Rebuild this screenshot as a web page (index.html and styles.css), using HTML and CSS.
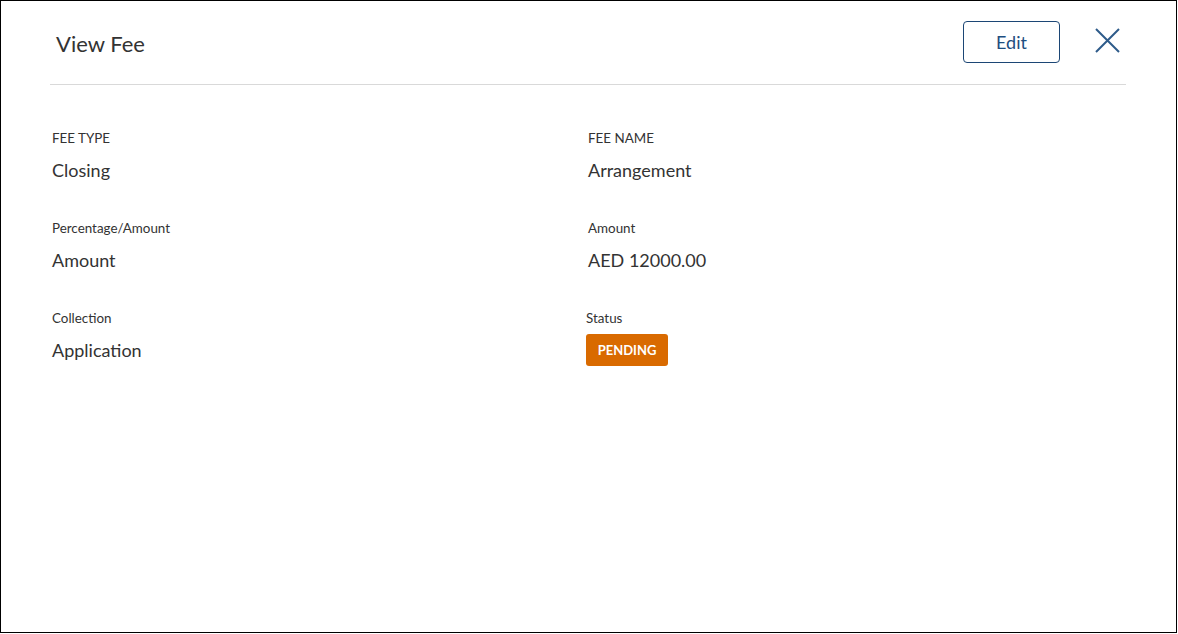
FILE: index.html
```html
<!DOCTYPE html>
<html lang="en">
<head>
<meta charset="utf-8">
<title>View Fee</title>
<link rel="stylesheet" href="styles.css">
</head>
<body>
<div class="modal">
  <header class="modal-header">
    <h1 class="modal-title">View Fee</h1>
    <div class="actions">
      <button class="btn-edit" type="button">Edit</button>
      <button class="btn-close" type="button" aria-label="Close">
        <svg width="25" height="25" viewBox="0 0 25 25" fill="none" stroke="#2e5b8a" stroke-width="2">
          <path d="M1 1 L24 24 M24 1 L1 24"/>
        </svg>
      </button>
    </div>
  </header>
  <section class="details">
    <div class="field">
      <div class="label">FEE TYPE</div>
      <div class="value">Closing</div>
    </div>
    <div class="field field-right">
      <div class="label">FEE NAME</div>
      <div class="value">Arrangement</div>
    </div>
    <div class="field">
      <div class="label">Percentage/Amount</div>
      <div class="value">Amount</div>
    </div>
    <div class="field field-right">
      <div class="label">Amount</div>
      <div class="value">AED 12000.00</div>
    </div>
    <div class="field">
      <div class="label">Collection</div>
      <div class="value">Application</div>
    </div>
    <div class="field field-status">
      <div class="label">Status</div>
      <div class="value"><span class="badge">PENDING</span></div>
    </div>
  </section>
</div>
</body>
</html>
```

FILE: styles.css
```css
* { box-sizing: border-box; }
html, body { margin: 0; padding: 0; background: #fff; }
body {
  font-family: Lato, "Noto Sans", sans-serif;
  color: #333;
}
.modal {
  width: 1177px;
  height: 633px;
  border: 1px solid #000;
  background: #fff;
}
.modal-header {
  margin: 0 50px 0 49px;
  padding: 20px 6px 21px 6px;
  display: flex;
  align-items: center;
  justify-content: space-between;
  border-bottom: 1px solid #d9d9d9;
}
.modal-title {
  margin: 0;
  font-size: 22px;
  font-weight: 400;
  line-height: 30px;
  color: #333;
  padding-top: 3px;
}
.actions {
  display: flex;
  align-items: center;
  gap: 35px;
}
.btn-edit {
  width: 97px;
  height: 42px;
  margin-left: 1px;
  border: 1px solid #1c4675;
  border-radius: 4px;
  background: #fff;
  color: #1d4e80;
  font-family: inherit;
  font-size: 18px;
  cursor: pointer;
  padding: 0;
}
.btn-close {
  width: 25px;
  height: 25px;
  padding: 0;
  border: 0;
  background: none;
  margin-bottom: 4px;
  display: block;
  cursor: pointer;
}
.btn-close svg { display: block; }
.details {
  margin: 0 50px 0 49px;
  padding-top: 44px;
  display: grid;
  grid-template-columns: 536px 1fr;
  row-gap: 37px;
}
.field { padding-left: 2px; }
.field-status { padding-left: 0; }
.label {
  font-size: 13.4px;
  line-height: 18px;
  color: #333;
}
.value {
  margin-top: 11px;
  font-size: 18px;
  line-height: 24px;
  color: #333;
}
.badge {
  display: inline-flex;
  align-items: center;
  justify-content: center;
  width: 82px;
  height: 32px;
  margin-top: -4px;
  vertical-align: top;
  background: #d96a00;
  color: #fff;
  font-size: 13px;
  font-weight: 700;
  border-radius: 3px;
}
```
